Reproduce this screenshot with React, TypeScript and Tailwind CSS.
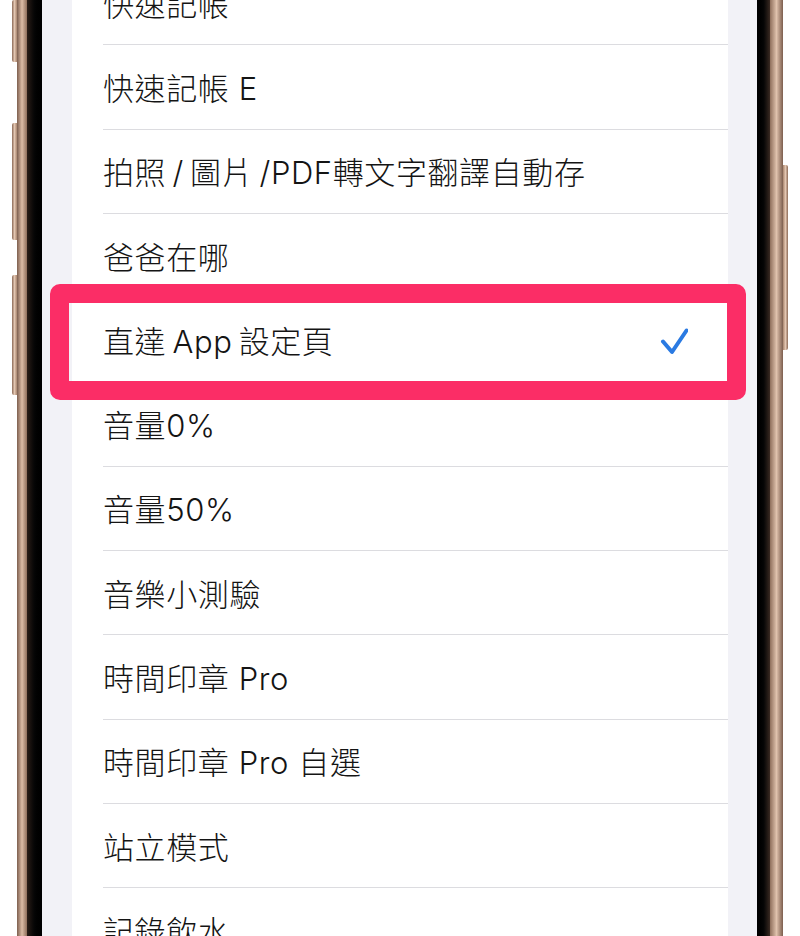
const items = [
  '快速記帳',
  '快速記帳 E',
  '拍照\u2009/\u2009圖片\u2009/PDF轉文字翻譯自動存',
  '爸爸在哪',
  '直達\u2009App\u2009設定頁',
  '音量0%',
  '音量50%',
  '音樂小測驗',
  '時間印章 Pro',
  '時間印章 Pro 自選',
  '站立模式',
  '記錄飲水',
];

const selected = 4;

const SideButton = ({ className }: { className: string }) => (
  <div
    className={`w-[5px] rounded-l-[2px] bg-gradient-to-r from-[#8c6b58] via-[#e3c6b1] to-[#a9866f] ${className}`}
  ></div>
);

const App = () => {
  return (
    <div
      className="w-[800px] h-[936px] overflow-hidden bg-white flex"
      style={{ fontFamily: 'Inter, "Noto Sans CJK TC", "Noto Sans", sans-serif' }}
    >
      {/* left buttons */}
      <div className="w-[17px] flex flex-col items-end">
        <SideButton className="h-[62px]" />
        <SideButton className="h-[117px] mt-[61px]" />
        <SideButton className="h-[120px] mt-[35px]" />
      </div>

      {/* left frame */}
      <div className="w-[10px] bg-gradient-to-r from-[#7d5f4f] via-[#dcbca6] to-[#8f6f5c]"></div>
      <div className="w-[15px] bg-gradient-to-r from-[#2a1d17] via-[#050505] to-[#000000]"></div>

      {/* screen */}
      <div className="w-[715px] bg-[#f2f2f7] pl-[30px] pr-[29px]">
        <div className="bg-white -mt-[39px]">
          {items.map((label, index) => (
            <div key={index} className="relative pl-[31px]">
              <div className="h-[84.3px] flex items-center justify-between border-b border-[#dcdce0] pt-[3px] pr-[38px]">
                <span className="text-[31px] font-light leading-none text-[#141414] tracking-[0.6px]">{label}</span>
                {index === selected && (
                  <svg width="28" height="28" viewBox="0 0 28 28" className="mr-[2px]">
                    <path
                      d="M3 14.5 L12 25 L26.5 3.5"
                      fill="none"
                      stroke="#2a7ae2"
                      strokeWidth="4"
                      strokeLinecap="round"
                      strokeLinejoin="round"
                    />
                  </svg>
                )}
              </div>
              {index === selected && (
                <div className="absolute -left-[22px] -right-[18px] -top-[14px] -bottom-[18px] border-[19px] border-[#fb2d66] rounded-[10px] pointer-events-none"></div>
              )}
            </div>
          ))}
        </div>
      </div>

      {/* right frame */}
      <div className="w-[13px] bg-gradient-to-r from-[#000000] via-[#050505] to-[#3a2a22]"></div>
      <div className="w-[13px] bg-gradient-to-r from-[#8f6f5c] via-[#e0c2ad] to-[#7d5f4f]"></div>
      <div className="w-[5px] flex flex-col">
        <div className="h-[185px] mt-[165px] w-[5px] rounded-r-[2px] bg-gradient-to-r from-[#a9866f] via-[#e3c6b1] to-[#8c6b58]"></div>
      </div>
    </div>
  );
};

export default App;
